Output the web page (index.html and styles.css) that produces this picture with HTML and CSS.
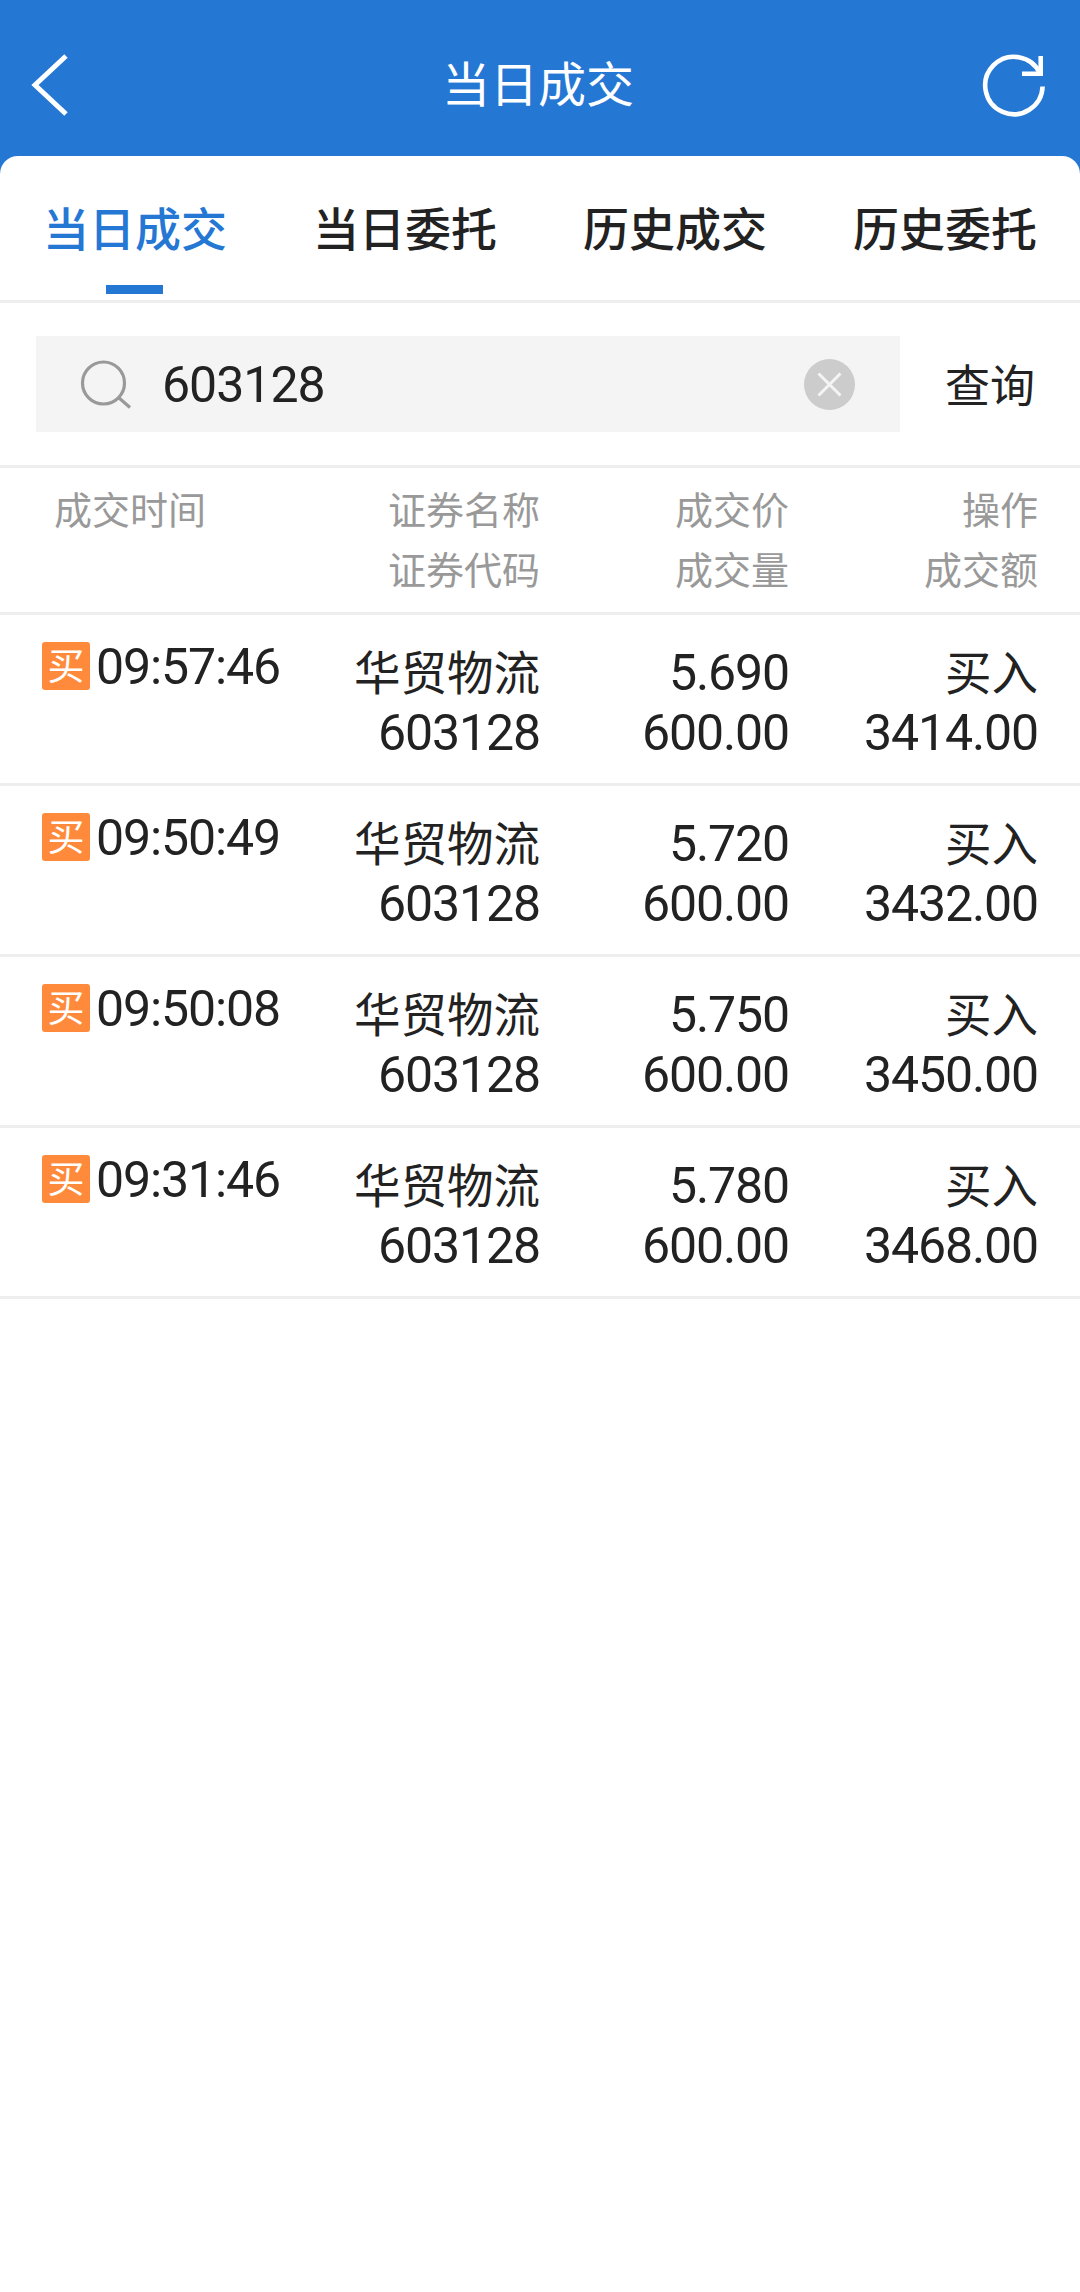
FILE: index.html
```html
<!DOCTYPE html>
<html lang="zh-CN">
<head>
    <meta charset="UTF-8">
    <meta name="viewport" content="width=device-width, initial-scale=1.0">
    <title>当日成交</title>
    <link rel="stylesheet" href="styles.css">
</head>
<body>
    <div class="header">
        <svg class="back-icon" viewBox="0 0 40 64" fill="none" stroke="#fff" stroke-width="5">
            <path d="M36 3 L5 32 L36 61"/>
        </svg>
        <h1>当日成交</h1>
        <svg class="refresh-icon" viewBox="0 0 68 68" fill="none" stroke="#fff" stroke-width="4.6">
            <path d="M62.6 35.5 A28.7 28.7 0 1 1 60 22.5"/>
            <path d="M60.7 5 V22.7 H42"/>
        </svg>
    </div>

    <div class="main">
        <div class="tabs">
            <div class="tab active">当日成交</div>
            <div class="tab">当日委托</div>
            <div class="tab">历史成交</div>
            <div class="tab">历史委托</div>
        </div>

        <div class="search">
            <div class="search-box">
                <svg class="search-icon" viewBox="0 0 52 50" fill="none" stroke="#999" stroke-width="3.2">
                    <circle cx="23.5" cy="24" r="21"/>
                    <path d="M38.5 38.5 L50 48.5"/>
                </svg>
                <input class="search-input" type="text" value="603128">
                <svg class="clear-icon" viewBox="0 0 51 51">
                    <circle cx="25.5" cy="25.5" r="25.5" fill="#ccc"/>
                    <path d="M14.5 14.5 L36.5 36.5 M36.5 14.5 L14.5 36.5" stroke="#f4f4f4" stroke-width="3"/>
                </svg>
            </div>
            <div class="search-button">查询</div>
        </div>

        <div class="row row-head">
            <div class="cell-time">成交时间</div>
            <div class="cell"><p>证券名称</p><p>证券代码</p></div>
            <div class="cell"><p>成交价</p><p>成交量</p></div>
            <div class="cell"><p>操作</p><p>成交额</p></div>
        </div>

        <div class="row">
            <div class="cell-time"><span class="badge">买</span><span class="num">09:57:46</span></div>
            <div class="cell"><p>华贸物流</p><p class="num">603128</p></div>
            <div class="cell"><p class="num">5.690</p><p class="num">600.00</p></div>
            <div class="cell"><p>买入</p><p class="num">3414.00</p></div>
        </div>
        <div class="row">
            <div class="cell-time"><span class="badge">买</span><span class="num">09:50:49</span></div>
            <div class="cell"><p>华贸物流</p><p class="num">603128</p></div>
            <div class="cell"><p class="num">5.720</p><p class="num">600.00</p></div>
            <div class="cell"><p>买入</p><p class="num">3432.00</p></div>
        </div>
        <div class="row">
            <div class="cell-time"><span class="badge">买</span><span class="num">09:50:08</span></div>
            <div class="cell"><p>华贸物流</p><p class="num">603128</p></div>
            <div class="cell"><p class="num">5.750</p><p class="num">600.00</p></div>
            <div class="cell"><p>买入</p><p class="num">3450.00</p></div>
        </div>
        <div class="row">
            <div class="cell-time"><span class="badge">买</span><span class="num">09:31:46</span></div>
            <div class="cell"><p>华贸物流</p><p class="num">603128</p></div>
            <div class="cell"><p class="num">5.780</p><p class="num">600.00</p></div>
            <div class="cell"><p>买入</p><p class="num">3468.00</p></div>
        </div>
    </div>
</body>
</html>
```
FILE: styles.css
```css
:root {
    --blue: #2577d4;
    --text: #222;
    --gray: #999;
    --line: #eee;
    --orange: #ff8a3b;
}

* {
    box-sizing: border-box;
}

body {
    margin: 0;
    background: var(--blue);
    color: var(--text);
    font-family: "Noto Sans CJK SC", sans-serif;
}

p {
    margin: 0;
}

.header {
    display: flex;
    align-items: center;
    justify-content: space-between;
    height: 156px;
    padding: 13px 32px 0 30px;
    color: #fff;
}

.header h1 {
    margin: 0 0 7px;
    font-size: 48px;
    font-weight: 400;
    line-height: 70px;
}

.back-icon {
    width: 40px;
    height: 64px;
    margin-right: 26px;
}

.refresh-icon {
    width: 68px;
    height: 68px;
}

.main {
    min-height: 2136px;
    background: #fff;
    border-radius: 18px 18px 0 0;
}

.tabs {
    display: flex;
    height: 147px;
    border-bottom: 3px solid var(--line);
}

.tab {
    position: relative;
    flex: 1;
    font-size: 46px;
    font-weight: 500;
    line-height: 141px;
    text-align: center;
}

.tab.active {
    color: var(--blue);
}

.tab.active::after {
    content: '';
    position: absolute;
    left: 50%;
    bottom: 6px;
    width: 57px;
    height: 9px;
    margin-left: -29px;
    background: var(--blue);
}

.search {
    display: flex;
    align-items: center;
    height: 165px;
    padding-left: 36px;
    border-bottom: 3px solid var(--line);
}

.search-box {
    display: flex;
    align-items: center;
    width: 864px;
    height: 96px;
    padding: 0 45px 0 44px;
    background: #f4f4f4;
}

.search-icon {
    width: 52px;
    height: 50px;
}

.search-input {
    flex: 1;
    min-width: 0;
    margin-left: 30px;
    padding: 2px 0 0;
    border: none;
    outline: none;
    background: none;
    color: var(--text);
    font-family: Roboto, sans-serif;
    font-size: 50px;
    letter-spacing: -1px;
}

.clear-icon {
    width: 51px;
    height: 51px;
}

.search-button {
    flex: 1;
    padding-bottom: 2px;
    font-size: 45px;
    text-align: center;
}

.row {
    display: grid;
    grid-template-columns: 292px 248px 249px 249px;
    height: 171px;
    padding-top: 27px;
    border-bottom: 3px solid var(--line);
    font-size: 46.5px;
}

.cell {
    text-align: right;
}

.cell p {
    height: 60px;
    line-height: 56px;
}

.cell-time {
    display: flex;
    align-items: flex-start;
    height: 48px;
    padding-left: 42px;
    line-height: 51px;
}

.num {
    font-family: Roboto, sans-serif;
    font-size: 50px;
    letter-spacing: -1.1px;
}

.cell .num {
    line-height: 63px;
}

.badge {
    width: 48px;
    height: 48px;
    margin-right: 6px;
    border-radius: 3px;
    background: var(--orange);
    color: #fff;
    font-size: 37px;
    line-height: 45px;
    text-align: center;
}

.row-head {
    height: 147px;
    padding-top: 12px;
    color: var(--gray);
    font-size: 38px;
}

.row-head .cell-time {
    padding-left: 54px;
    line-height: 56px;
}
```
